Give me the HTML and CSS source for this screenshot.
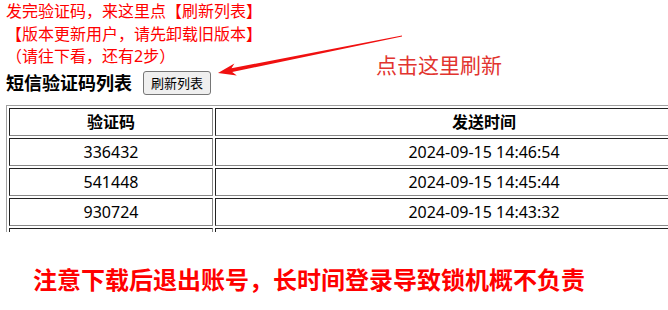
FILE: index.html
```html
<!DOCTYPE html>
<html>
  <head>
    <meta name="viewport" content="width=device-width,initial-scale=1.0">
    <title>短信验证码列表</title>
    <link rel="stylesheet" href="styles.css">
  </head>
  <body>
    <section class="page">
      <div class="tips">
        <p>发完验证码，来这里点【刷新列表】</p>
        <p>【版本更新用户，请先卸载旧版本】</p>
        <p>（请往下看，还有2步）</p>
      </div>
      <div class="titleRow">
        <h2 class="listTitle">短信验证码列表</h2>
        <button class="refreshBtn">刷新列表</button>
      </div>
      <div class="tableClip">
        <table class="codes">
          <tr>
            <th class="codeCol">验证码</th>
            <th>发送时间</th>
          </tr>
          <tr>
            <td>336432</td>
            <td>2024-09-15 14:46:54</td>
          </tr>
          <tr>
            <td>541448</td>
            <td>2024-09-15 14:45:44</td>
          </tr>
          <tr>
            <td>930724</td>
            <td>2024-09-15 14:43:32</td>
          </tr>
          <tr>
            <td>&nbsp;</td>
            <td>&nbsp;</td>
          </tr>
        </table>
      </div>
      <p class="notice">注意下载后退出账号，长时间登录导致锁机概不负责</p>
    </section>

    <!-- annotation over the screenshot -->
    <svg class="arrow" width="200" height="52" viewBox="0 0 200 52">
      <polygon fill="#f01010" points="8,43 24.4,33.6 21.5,38.3 192,5.5 192,6.5 22.2,42 26.8,45.4"/>
    </svg>
    <p class="hint">点击这里刷新</p>
  </body>
</html>
```

FILE: styles.css
```css
body
{
  margin: 0;
  padding: 0;
  font-family: "Noto Sans", "Noto Sans CJK SC", sans-serif;
  background: #fff;
  color: #000;
  width: 668px;
  height: 310px;
  overflow: hidden;
  position: relative;
}
.page{
  padding: 0 6px;
}
.tips p{
  margin: 0;
  color: #f00;
  font-size: 16px;
  line-height: 22.5px;
  white-space: nowrap;
}
.titleRow{
  display: flex;
  align-items: center;
  margin-top: 2px;
  height: 26px;
}
.listTitle{
  margin: 0;
  font-size: 18px;
  font-weight: bold;
  line-height: 26px;
}
.refreshBtn{
  margin-left: 11px;
  height: 24px;
  padding: 0 7px;
  font-family: "Noto Sans CJK SC", sans-serif;
  font-size: 13px;
  background-color: #efefef;
  border: 1px solid #767676;
  border-radius: 3px;
  color: #000;
}
.tableClip{
  margin-top: 9px;
  height: 127px;
  overflow: hidden;
  width: 662px;
}
.codes{
  width: 750px;
  table-layout: fixed;
  border-spacing: 2px;
  border: 1px solid;
  border-color: #a0a0a0 #555 #555 #a0a0a0;
}
.codes th, .codes td{
  padding: 1px;
  line-height: 24px;
  font-size: 16px;
  text-align: center;
  border: 1px solid;
  border-color: #222 #888 #888 #222;
  white-space: nowrap;
}
.codes th{
  font-weight: bold;
}
.codeCol{
  box-sizing: border-box;
  width: 204px;
}
.notice{
  margin: 31px 0 0 27px;
  color: #f00;
  font-size: 24px;
  font-weight: bold;
  line-height: 34px;
  white-space: nowrap;
}
.arrow{
  position: absolute;
  left: 210px;
  top: 30px;
}
.hint{
  position: absolute;
  left: 376px;
  top: 49px;
  margin: 0;
  font-family: "Noto Sans CJK SC", sans-serif;
  font-size: 21px;
  line-height: 30px;
  color: #e2342f;
}
```
